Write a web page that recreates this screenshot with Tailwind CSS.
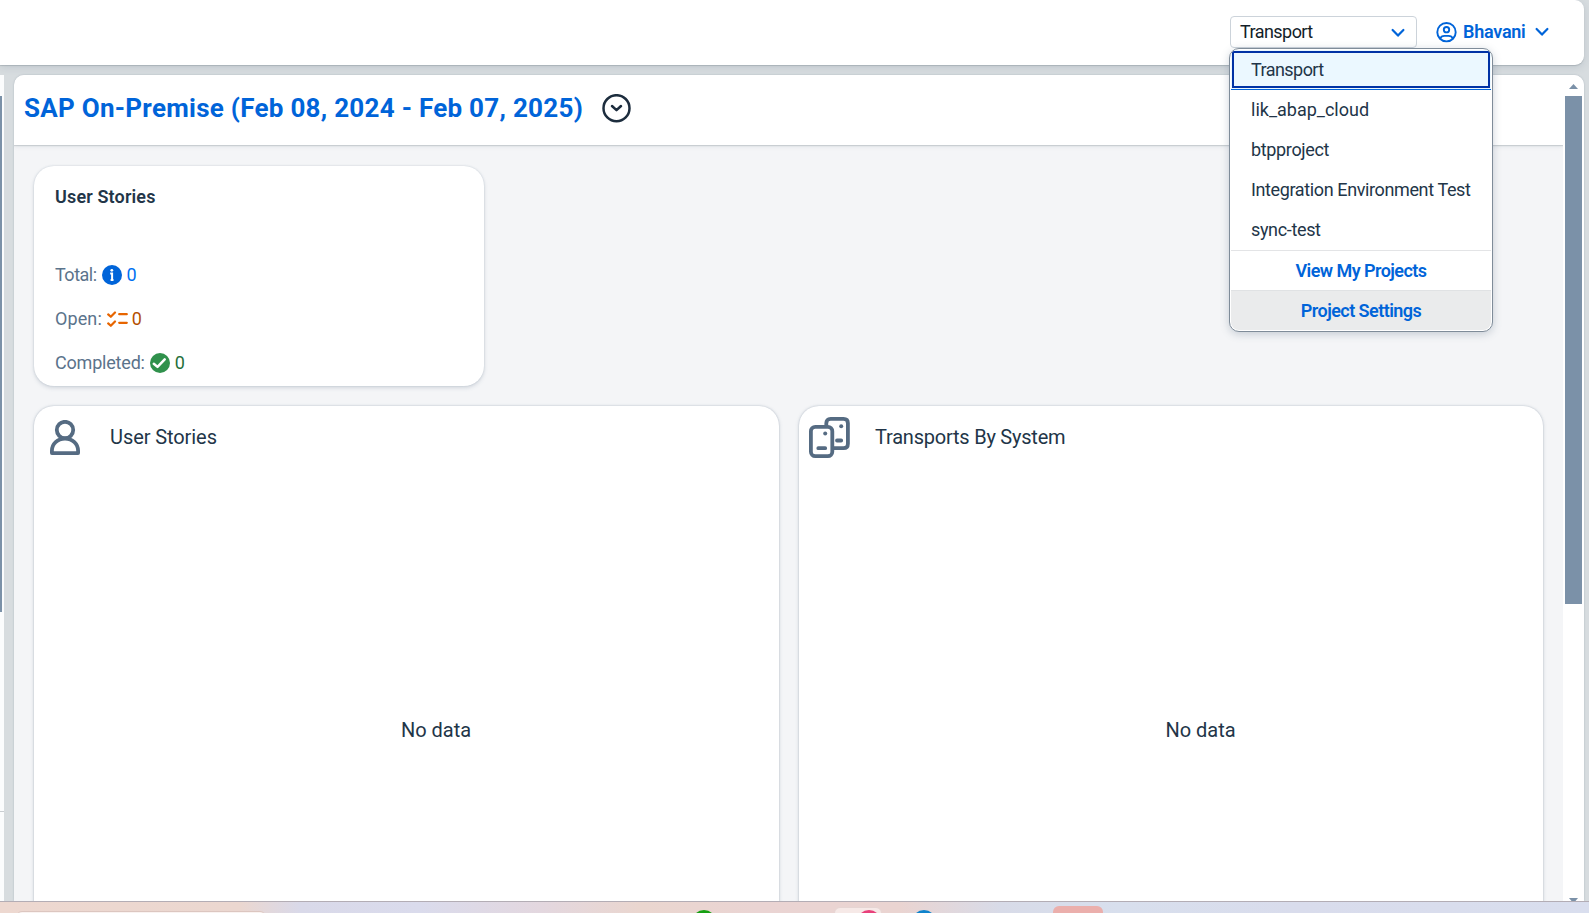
<!DOCTYPE html>
<html lang="en">
<head>
<meta charset="utf-8">
<title>Project Dashboard</title>
<script src="https://cdn.jsdelivr.net/npm/@tailwindcss/browser@4"></script>
</head>
<body class="w-[1589px] h-[913px] overflow-hidden relative flex flex-col bg-[#d7dcdf] font-[Roboto,sans-serif] text-[18px] text-[#223548]">

<!-- Shell bar -->
<header class="relative h-[65px] w-[1584px] shrink-0 bg-white rounded-r-[9px] shadow-[0_1px_1px_rgba(85,95,105,0.25),0_2px_8px_rgba(85,107,130,0.18)] flex items-start pt-4 pl-[1230px]">
  <div class="w-[187px] h-8 border border-[#ccd3da] rounded-[4px] flex items-center justify-between pl-[9px] pr-[11px] text-[#131e29]">
    <span class="pb-[2px] tracking-[-0.55px]">Transport</span>
    <svg class="w-[14px] h-[10px] mt-px" viewBox="0 0 14 10" fill="none" stroke="#0064d9" stroke-width="2.2" stroke-linecap="round" stroke-linejoin="round"><path d="M1.6 2 7 7.6 12.4 2"/></svg>
  </div>
  <div class="h-8 ml-[19px] flex items-center font-semibold text-[#0064d9]">
    <svg class="w-[21px] h-[21px]" viewBox="0 0 21 21" fill="none" stroke="#0064d9" stroke-width="1.9"><circle cx="10.5" cy="10.2" r="9.2"/><circle cx="10.5" cy="7.7" r="2.7"/><path d="M4 16.8C5 14.4 6.800 13.900 8.500 13.900h4c1.700 0 3.500.5 4.500 2.900"/></svg>
    <span class="ml-[6px] pb-[2px] tracking-[-0.25px]">Bhavani</span>
    <svg class="w-[14px] h-[10px] ml-[9px]" viewBox="0 0 14 10" fill="none" stroke="#0064d9" stroke-width="2.2" stroke-linecap="round" stroke-linejoin="round"><path d="M1.6 2 7 7.6 12.4 2"/></svg>
  </div>
</header>

<div class="flex h-[836px] shrink-0 pt-[10px]">
  <!-- Side navigation edge -->
  <aside class="w-1 bg-[#fbfcfd] flex flex-col">
    <div class="mt-[21px] w-[2px] h-[516px] bg-[#7b91a8]"></div>
    <div class="mt-[199px] h-px bg-[#c9cdd1]"></div>
  </aside>

  <!-- Page -->
  <main class="ml-[10px] w-[1570px] bg-[#f4f5f7] rounded-t-[10px] overflow-hidden flex shadow-[0_0_2px_rgba(85,107,130,0.35)]">
    <div class="w-[1549px] flex flex-col">
      <div class="h-[70px] shrink-0 bg-white shadow-[0_1px_1px_rgba(85,95,105,0.2),0_2px_4px_rgba(85,107,130,0.1)] flex items-center pl-[10px] pb-[4px]">
        <h1 class="text-[26px] leading-8 font-bold tracking-[0.27px] text-[#0064d9] whitespace-nowrap">SAP On-Premise (Feb 08, 2024 - Feb 07, 2025)</h1>
        <svg class="w-[29px] h-[29px] ml-[19px]" viewBox="0 0 29 29" fill="none" stroke="#1d2d3e" stroke-width="2.5" stroke-linecap="round" stroke-linejoin="round"><circle cx="14.5" cy="14.2" r="13"/><path d="M10 12l4.5 4.2 4.5-4.2"/></svg>
      </div>

      <div class="flex flex-col gap-5 pl-5 pt-[21px]">
        <section class="w-[450px] h-[220px] rounded-[20px] bg-white shadow-[0_0_2px_rgba(85,107,130,0.25),0_2px_4px_rgba(85,107,130,0.2)] px-[21px] pt-[19px]">
          <h2 class="leading-6 font-semibold tracking-[0.15px]">User Stories</h2>
          <div class="mt-[43px] h-11 flex items-center text-[#5b738b]">
            <span class="tracking-[-0.5px]">Total:</span>
            <svg class="w-5 h-5 ml-[5px] mt-px" viewBox="0 0 20 20"><circle cx="10" cy="10" r="10" fill="#0064d9"/><circle cx="9.800" cy="5.3" r="1.400" fill="#fff"/><path d="M8.2 8.6h1.900v6.200M8.600 15h2.900" fill="none" stroke="#fff" stroke-width="2"/></svg>
            <span class="ml-[5px] text-[#0070f2]">0</span>
          </div>
          <div class="h-11 flex items-center text-[#5b738b]">
            <span class="tracking-[0.1px]">Open:</span>
            <svg class="w-[21px] h-[16px] ml-[5px] mt-px" viewBox="0 0 21 16" fill="none" stroke="#e76500" stroke-width="2.200" stroke-linecap="round" stroke-linejoin="round"><path d="M1.2 3.4l2.6 2.4 4.2-4.3M1.2 12.4l2.6 2.4L8 10.5M12.2 3.2h7.6M12.2 11.8h7.6"/></svg>
            <span class="ml-[4px] text-[#b44f00]">0</span>
          </div>
          <div class="h-11 flex items-center text-[#5b738b]">
            <span class="tracking-[-0.2px]">Completed:</span>
            <svg class="w-5 h-5 ml-[5px] mt-px" viewBox="0 0 20 20"><circle cx="10" cy="10" r="10" fill="#30914c"/><path d="M3.800 10.7l3.700 3.200 7.200-7.500" fill="none" stroke="#fff" stroke-width="2.5" stroke-linecap="round" stroke-linejoin="round"/></svg>
            <span class="ml-[5px] text-[#256f3a]">0</span>
          </div>
        </section>

        <div class="flex gap-5 text-[20px]">
          <section class="w-[745px] h-[540px] rounded-[20px] bg-white shadow-[0_0_2px_rgba(85,107,130,0.35),0_1px_4px_rgba(85,107,130,0.2)]">
            <div class="h-[62px] flex items-center">
              <svg class="w-[30px] h-[35px] ml-4" viewBox="0 0 30 35" fill="none" stroke="#556b82" stroke-width="3.8" stroke-linejoin="round"><circle cx="15" cy="10" r="8.2"/><path d="M1.9 33.1v-2.3C1.9 23.8 7.5 18.6 15 18.6s13.1 5.2 13.1 12.2v2.3z"/></svg>
              <span class="ml-[30px] tracking-[-0.08px]">User Stories</span>
            </div>
            <div class="mt-[247px] pl-[59px] h-[30px] leading-[30px] text-center">No data</div>
          </section>
          <section class="w-[744px] h-[540px] rounded-[20px] bg-white shadow-[0_0_2px_rgba(85,107,130,0.35),0_1px_4px_rgba(85,107,130,0.2)]">
            <div class="h-[62px] flex items-center">
              <svg class="w-[41px] h-[41px] ml-[10px]" viewBox="0 0 41 41" fill="none" stroke="#556b82" stroke-width="3.8" stroke-linecap="round"><path d="M17.3 8V6.2Q17.3 1.9 21.6 1.9H34.5Q38.9 1.9 38.9 6.2V26.8Q38.9 31.2 34.5 31.2H25"/><rect x="1.9" y="9.9" width="21.4" height="29.2" rx="4.4"/><path d="M9.3 31.2h6.9M28 23.5h4.2"/><circle cx="16.2" cy="16.4" r="2" fill="#556b82" stroke="none"/><circle cx="32.2" cy="9.3" r="2" fill="#556b82" stroke="none"/></svg>
              <span class="ml-[25px] tracking-[-0.22px]">Transports By System</span>
            </div>
            <div class="mt-[247px] pl-[59px] h-[30px] leading-[30px] text-center">No data</div>
          </section>
        </div>
      </div>
    </div>

    <!-- Scrollbar -->
    <div class="w-[21px] bg-white flex flex-col pl-[2px]">
      <svg class="w-[9px] h-[5px] ml-[4px] mt-[9px] shrink-0" viewBox="0 0 9 5" fill="#7b91a8"><path d="M4.5 0 9 5H0z"/></svg>
      <div class="mt-[7px] w-[17px] h-[508px] shrink-0 bg-[#7b91a8]"></div>
      <svg class="w-[9px] h-[3px] ml-[4px] mt-[294px] shrink-0" viewBox="0 0 9 3" fill="#7b91a8"><path d="M0 0H9L6.5 3H2.5z"/></svg>
    </div>
  </main>
</div>

<!-- Desktop taskbar -->
<footer class="relative h-3 shrink-0 border-t border-[#b3adb5] overflow-hidden bg-[linear-gradient(90deg,#edd8d0_0,#ebd7d0_240px,#d9d9e9_300px,#dadbec_420px,#e3d7df_540px,#ead6cf_640px,#ead4d3_760px,#ead4d1_900px,#d8dbe8_1000px,#d8dfed_1120px,#d9dcec_1300px,#d9deee_1589px)]">
  <div class="absolute left-4 top-[9px] w-[250px] h-8 rounded-[6px] bg-[#faf3f1] border border-[#dcc6c0]"></div>
  <div class="absolute left-[692px] top-2 size-6 rounded-full bg-[#16a012]"></div>
  <div class="absolute left-[834px] top-[5px] w-12 h-10 rounded-[6px] bg-[#f6e9e7] border border-[#e6d5d3]"></div>
  <div class="absolute left-[857px] top-2 size-6 rounded-full bg-[#e8407a]"></div>
  <div class="absolute left-[912px] top-2 size-6 rounded-full bg-[#0f83cc]"></div>
  <div class="absolute left-[1053px] top-1 w-[50px] h-10 rounded-[6px] bg-[#ebafac]"></div>
</footer>

<!-- Project selection menu -->
<div class="absolute left-[1229px] top-[48px] w-[264px] h-[284px] rounded-[10px] bg-white border border-[#7f8c99] p-px shadow-[0_2px_8px_rgba(85,107,130,0.3)] overflow-hidden">
  <div class="h-10 bg-[#ebf8ff] border-b border-[#0064d9] p-px flex">
    <div class="grow h-[37px] border-2 border-[#0032a5] flex items-center pl-[17px] tracking-[-0.55px]">Transport</div>
  </div>
  <div class="h-10 pb-[2px] flex items-center pl-[20px]">lik_abap_cloud</div>
  <div class="h-10 pb-[2px] flex items-center pl-[20px] tracking-[-0.35px]">btpproject</div>
  <div class="h-10 pb-[2px] flex items-center pl-[20px] tracking-[-0.38px] whitespace-nowrap">Integration Environment Test</div>
  <div class="h-10 pb-[2px] flex items-center pl-[20px] tracking-[-0.35px]">sync-test</div>
  <div class="h-10 flex items-center justify-center border-t border-[#e3e4e6] font-semibold tracking-[-0.55px] text-[#0064d9]">View My Projects</div>
  <div class="h-10 flex items-center justify-center border-t border-[#e0e2e4] rounded-b-[8px] bg-[#eaebec] font-semibold tracking-[-0.55px] text-[#0064d9]">Project Settings</div>
</div>
</body>
</html>
